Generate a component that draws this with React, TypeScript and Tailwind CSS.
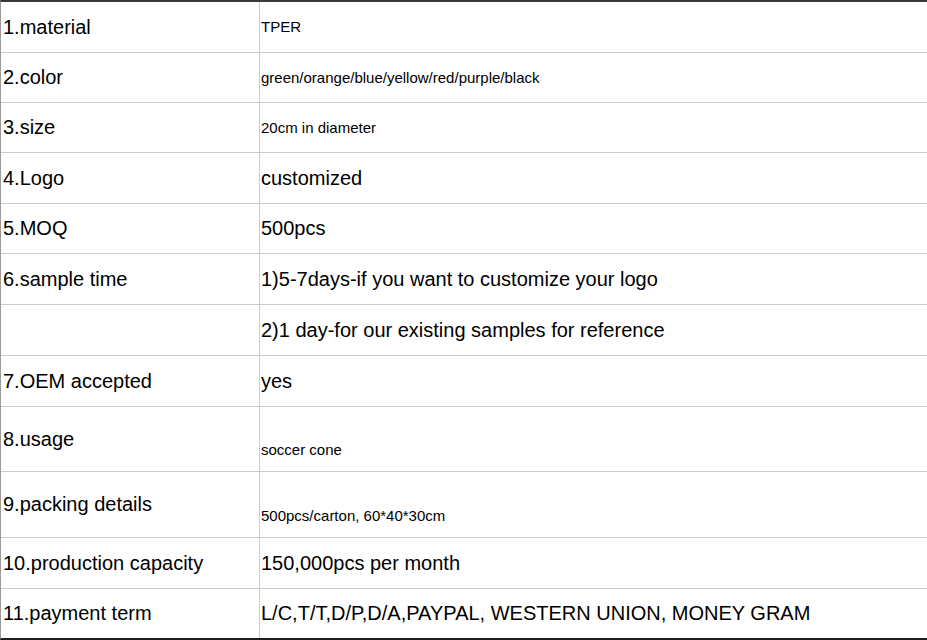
import React from "react";

type Row = {
  label: string;
  value: string;
  small?: boolean; // 15px text in the value cell
  h: number; // row height incl. bottom rule
  low?: boolean; // value sits below an empty line
};

const ROWS: Row[] = [
  { label: "1.material", value: "TPER", small: true, h: 51 },
  { label: "2.color", value: "green/orange/blue/yellow/red/purple/black", small: true, h: 50 },
  { label: "3.size", value: "20cm in diameter", small: true, h: 50 },
  { label: "4.Logo", value: "customized", h: 51 },
  { label: "5.MOQ", value: "500pcs", h: 50 },
  { label: "6.sample time", value: "1)5-7days-if you want to customize your logo", h: 51 },
  { label: "", value: "2)1 day-for our existing samples for reference", h: 51 },
  { label: "7.OEM accepted", value: "yes", h: 51 },
  { label: "8.usage", value: "soccer cone", small: true, h: 65, low: true },
  { label: "9.packing details", value: "500pcs/carton, 60*40*30cm", small: true, h: 66, low: true },
  { label: "10.production capacity", value: "150,000pcs per month", h: 51 },
  { label: "11.payment term", value: "L/C,T/T,D/P,D/A,PAYPAL, WESTERN UNION, MONEY GRAM", h: 49 },
];

const heightClass: Record<number, string> = {
  49: "h-[49px]",
  50: "h-[50px]",
  51: "h-[51px]",
  65: "h-[65px]",
  66: "h-[66px]",
};

export default function App() {
  return (
    <div
      className="w-[927px] h-[640px] overflow-hidden bg-white text-black"
      style={{ fontFamily: '"Liberation Sans", Arial, sans-serif' }}
    >
      <div className="flex flex-col border-t-2 border-t-[#3a3a3a] border-b-2 border-b-[#1e1e1e] border-l border-l-[#9a9a9a]">
        {ROWS.map((r, i) => (
          <div
            key={i}
            className={`flex ${heightClass[r.h]} ${i < ROWS.length - 1 ? "border-b border-[#cccccc]" : ""}`}
          >
            <div className="w-[259px] shrink-0 flex items-center pl-[2px] pb-[1px] text-[20px] leading-none border-r border-[#cccccc]">
              {r.label}
            </div>
            <div
              className={`flex-1 flex items-center pl-[1px] whitespace-nowrap leading-none ${
                r.small ? "text-[15px]" : "text-[20px]"
              } ${r.low ? "pt-[21px]" : "pb-[1px]"}`}
            >
              {r.value}
            </div>
          </div>
        ))}
      </div>
    </div>
  );
}
